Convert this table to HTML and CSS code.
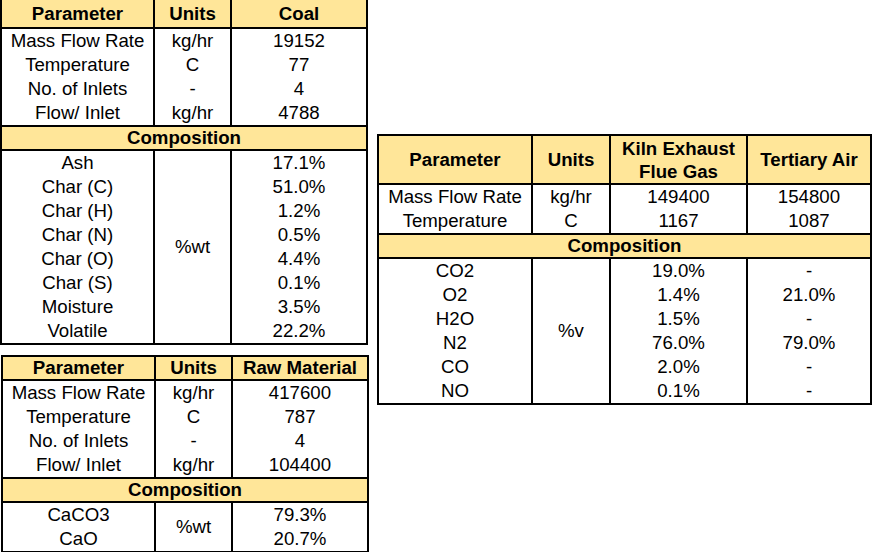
FILE: index.html
```html
<!DOCTYPE html>
<html>
<head>
<meta charset="utf-8">
<link rel="stylesheet" href="styles.css">
</head>
<body>
<div class="page">
  <div class="left">
    <table class="t t1">
      <colgroup><col class="c1"><col class="c2"><col class="c3"></colgroup>
      <tr class="hd first"><th>Parameter</th><th>Units</th><th>Coal</th></tr>
      <tr class="r"><td>Mass Flow Rate</td><td>kg/hr</td><td>19152</td></tr>
      <tr class="r"><td>Temperature</td><td>C</td><td>77</td></tr>
      <tr class="r"><td>No. of Inlets</td><td>-</td><td>4</td></tr>
      <tr class="r"><td>Flow/ Inlet</td><td>kg/hr</td><td>4788</td></tr>
      <tr class="hd"><th colspan="3">Composition</th></tr>
      <tr class="r"><td>Ash</td><td rowspan="8">%wt</td><td>17.1%</td></tr>
      <tr class="r"><td>Char (C)</td><td>51.0%</td></tr>
      <tr class="r"><td>Char (H)</td><td>1.2%</td></tr>
      <tr class="r"><td>Char (N)</td><td>0.5%</td></tr>
      <tr class="r"><td>Char (O)</td><td>4.4%</td></tr>
      <tr class="r"><td>Char (S)</td><td>0.1%</td></tr>
      <tr class="r"><td>Moisture</td><td>3.5%</td></tr>
      <tr class="r"><td>Volatile</td><td>22.2%</td></tr>
    </table>
    <table class="t t3">
      <colgroup><col class="c1"><col class="c2"><col class="c3"></colgroup>
      <tr class="hd"><th>Parameter</th><th>Units</th><th>Raw Material</th></tr>
      <tr class="r"><td>Mass Flow Rate</td><td>kg/hr</td><td>417600</td></tr>
      <tr class="r"><td>Temperature</td><td>C</td><td>787</td></tr>
      <tr class="r"><td>No. of Inlets</td><td>-</td><td>4</td></tr>
      <tr class="r"><td>Flow/ Inlet</td><td>kg/hr</td><td>104400</td></tr>
      <tr class="hd"><th colspan="3">Composition</th></tr>
      <tr class="r"><td>CaCO3</td><td rowspan="2">%wt</td><td>79.3%</td></tr>
      <tr class="r"><td>CaO</td><td>20.7%</td></tr>
    </table>
  </div>
  <table class="t t2">
    <colgroup><col class="d1"><col class="d2"><col class="d3"><col class="d4"></colgroup>
    <tr class="hd tall"><th>Parameter</th><th>Units</th><th>Kiln Exhaust<br>Flue Gas</th><th>Tertiary Air</th></tr>
    <tr class="r"><td>Mass Flow Rate</td><td>kg/hr</td><td>149400</td><td>154800</td></tr>
    <tr class="r"><td>Temperature</td><td>C</td><td>1167</td><td>1087</td></tr>
    <tr class="hd"><th colspan="4">Composition</th></tr>
    <tr class="r"><td>CO2</td><td rowspan="6">%v</td><td>19.0%</td><td>-</td></tr>
    <tr class="r"><td>O2</td><td>1.4%</td><td>21.0%</td></tr>
    <tr class="r"><td>H2O</td><td>1.5%</td><td>-</td></tr>
    <tr class="r"><td>N2</td><td>76.0%</td><td>79.0%</td></tr>
    <tr class="r"><td>CO</td><td>2.0%</td><td>-</td></tr>
    <tr class="r"><td>NO</td><td>0.1%</td><td>-</td></tr>
  </table>
</div>
</body>
</html>
```

FILE: styles.css
```css
html, body {
  margin: 0;
  padding: 0;
  background: #ffffff;
}
body {
  width: 872px;
  height: 552px;
  overflow: hidden;
  font-family: "Liberation Sans", Arial, sans-serif;
  color: #000;
}
.page {
  display: flex;
  align-items: flex-start;
  gap: 9px;
}
.left {
  display: flex;
  flex-direction: column;
  gap: 10px;
  width: 368px;
}
.t {
  border-collapse: collapse;
  table-layout: fixed;
  border: 2px solid #000;
  font-size: 18.67px;
}
.t1 { width: 368px; border-top: none; }
.t3 { width: 368px; margin-left: 1px; }
.t2 { width: 495px; margin-top: 134px; }
.c1 { width: 153px; }
.c2 { width: 77px; }
.c3 { width: 136px; }
.d1 { width: 154px; }
.d2 { width: 78px; }
.d3 { width: 137px; }
.d4 { width: 124px; }
.t th, .t td {
  padding: 0;
  text-align: center;
  vertical-align: middle;
  line-height: 22px;
  white-space: nowrap;
}
.t th {
  background: #ffe699;
  font-weight: bold;
  border: 2px solid #000;
  height: 22px;
}
.t td {
  border-left: 2px solid #000;
  border-right: 2px solid #000;
  height: 24px;
}
.t1 .first th { height: 27px; border-top: none; }
.t2 .tall th { height: 47px; line-height: 23px; }
```
